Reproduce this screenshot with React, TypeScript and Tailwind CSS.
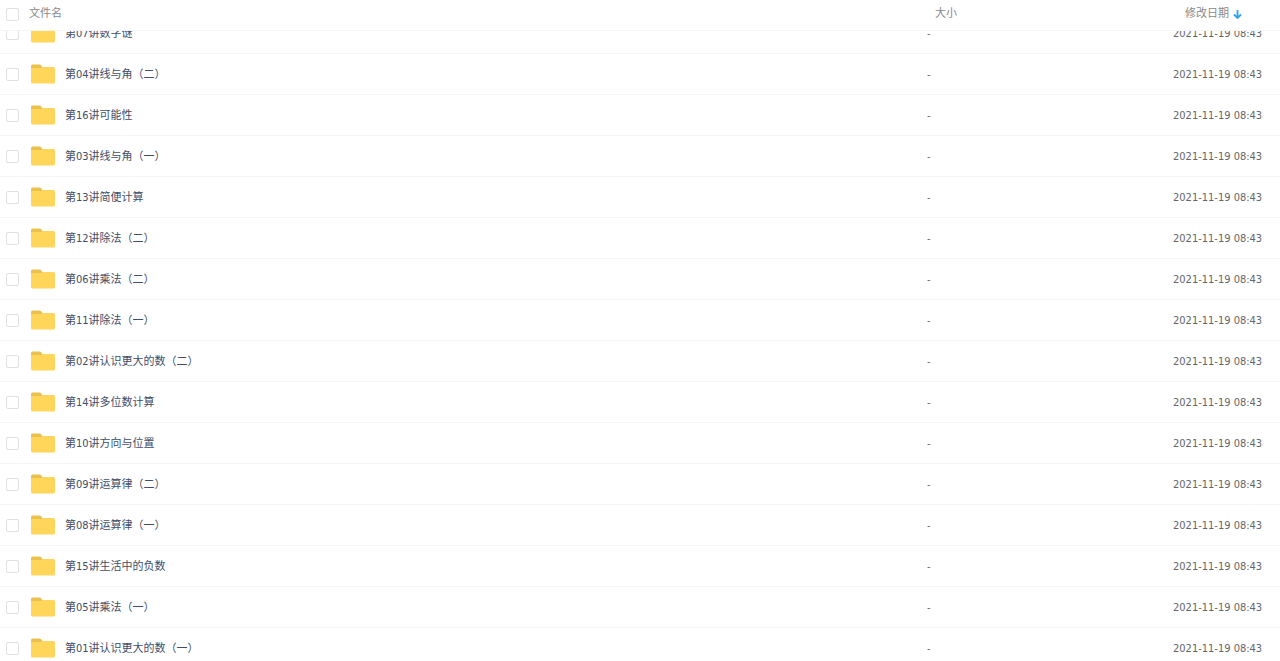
import React, { useLayoutEffect, useRef, useState } from 'react';

interface FileItem {
  name: string;
  size: string;
  modified: string;
}

const files: FileItem[] = [
  { name: '第07讲数字谜', size: '-', modified: '2021-11-19 08:43' },
  { name: '第04讲线与角（二）', size: '-', modified: '2021-11-19 08:43' },
  { name: '第16讲可能性', size: '-', modified: '2021-11-19 08:43' },
  { name: '第03讲线与角（一）', size: '-', modified: '2021-11-19 08:43' },
  { name: '第13讲简便计算', size: '-', modified: '2021-11-19 08:43' },
  { name: '第12讲除法（二）', size: '-', modified: '2021-11-19 08:43' },
  { name: '第06讲乘法（二）', size: '-', modified: '2021-11-19 08:43' },
  { name: '第11讲除法（一）', size: '-', modified: '2021-11-19 08:43' },
  { name: '第02讲认识更大的数（二）', size: '-', modified: '2021-11-19 08:43' },
  { name: '第14讲多位数计算', size: '-', modified: '2021-11-19 08:43' },
  { name: '第10讲方向与位置', size: '-', modified: '2021-11-19 08:43' },
  { name: '第09讲运算律（二）', size: '-', modified: '2021-11-19 08:43' },
  { name: '第08讲运算律（一）', size: '-', modified: '2021-11-19 08:43' },
  { name: '第15讲生活中的负数', size: '-', modified: '2021-11-19 08:43' },
  { name: '第05讲乘法（一）', size: '-', modified: '2021-11-19 08:43' },
  { name: '第01讲认识更大的数（一）', size: '-', modified: '2021-11-19 08:43' },
];

const INITIAL_SCROLL = 18;

const FolderIcon: React.FC = () => (
  <svg className="w-6 h-5 shrink-0" viewBox="0 0 24 20" aria-hidden="true">
    <path d="M0 2a1.5 1.5 0 0 1 1.5-1.5h7.3a1.5 1.5 0 0 1 1.1.5L11.5 3v3H0z" fill="#eac04f" />
    <path d="M0 4h10.600l1.200-1H22.500A1.500 1.500 0 0 1 24 4.500V18a1.500 1.500 0 0 1-1.500 1.500h-21A1.500 1.500 0 0 1 0 18z" fill="#ffd659" />
  </svg>
);

const SortArrow: React.FC = () => (
  <svg className="w-[9px] h-[9px]" viewBox="0 0 9 9" fill="none" stroke="#2ea3e6" strokeWidth="1.8" aria-hidden="true">
    <path d="M4.500 0v8M1 4.500l3.500 3.500L8 4.500" />
  </svg>
);

interface CheckboxProps {
  label: string;
  checked: boolean;
  onChange: () => void;
}

const Checkbox: React.FC<CheckboxProps> = ({ label, checked, onChange }) => (
  <input
    type="checkbox"
    aria-label={label}
    checked={checked}
    onChange={onChange}
    className="block appearance-none w-[13px] h-[13px] shrink-0 rounded-[2px] border border-[#dfdfe6] bg-white checked:bg-[#2ea3e6] checked:border-[#2ea3e6]"
  />
);

const App: React.FC = () => {
  const [selected, setSelected] = useState<string[]>([]);
  const listRef = useRef<HTMLDivElement>(null);

  useLayoutEffect(() => {
    if (listRef.current) listRef.current.scrollTop = INITIAL_SCROLL;
  }, []);

  const toggle = (name: string) => {
    setSelected((prev) => (prev.includes(name) ? prev.filter((n) => n !== name) : [...prev, name]));
  };

  const allSelected = selected.length === files.length;
  const toggleAll = () => setSelected(allSelected ? [] : files.map((f) => f.name));

  return (
    <div
      ref={listRef}
      className="h-screen overflow-y-auto [scrollbar-width:none] bg-white text-[11px] leading-4 font-['DejaVu_Sans_Condensed','Noto_Sans_CJK_SC',sans-serif]"
    >
      <table className="w-full table-fixed border-separate border-spacing-0 text-left">
        <thead className="sticky top-0 z-10 bg-white text-[#888]">
          <tr className="h-[31px]">
            <th className="p-0 pb-0.5 font-normal border-b border-[#f5f5f7]">
              <div className="flex items-center pl-1.5">
                <Checkbox label="全选" checked={allSelected} onChange={toggleAll} />
                <span className="pl-2.5">文件名</span>
              </div>
            </th>
            <th className="w-[246px] p-0 pb-0.5 pl-2 font-normal border-b border-[#f5f5f7]">大小</th>
            <th className="w-[107px] p-0 pb-0.5 pl-3 font-normal border-b border-[#f5f5f7]">
              <button type="button" className="flex items-center gap-1">
                修改日期
                <SortArrow />
              </button>
            </th>
          </tr>
        </thead>
        <tbody>
          {files.map((file) => (
            <tr key={file.name} className="h-[41px] hover:bg-[#f7fbff]">
              <td className="p-0 border-b border-[#f5f5f8]">
                <div className="flex items-center pl-1.5">
                  <Checkbox label={file.name} checked={selected.includes(file.name)} onChange={() => toggle(file.name)} />
                  <div className="flex items-center gap-2.5 pl-3">
                    <FolderIcon />
                    <a href="#" className="pt-0.5 text-[#424e67]">{file.name}</a>
                  </div>
                </div>
              </td>
              <td className="p-0 pt-0.5 text-[#666] border-b border-[#f5f5f8]">{file.size}</td>
              <td className="p-0 pt-0.5 text-[#666] border-b border-[#f5f5f8] whitespace-nowrap">{file.modified}</td>
            </tr>
          ))}
        </tbody>
      </table>
    </div>
  );
};

export default App;
